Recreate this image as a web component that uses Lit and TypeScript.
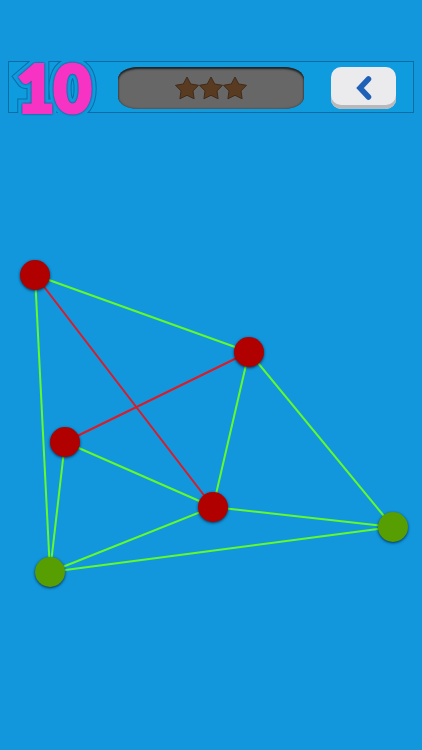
import { LitElement, html, svg, css } from 'lit';
import { customElement, property } from 'lit/decorators.js';
import { styleMap } from 'lit/directives/style-map.js';

interface Point {
  x: number;
  y: number;
  solved?: boolean;
}

interface Edge {
  from: number;
  to: number;
  crossed?: boolean;
}

const BOARD = { width: 422, height: 636 };

const POINTS: Point[] = [
  { x: 35, y: 162 },
  { x: 249, y: 239 },
  { x: 65, y: 329 },
  { x: 213, y: 394 },
  { x: 50, y: 459, solved: true },
  { x: 393, y: 414, solved: true },
];

const EDGES: Edge[] = [
  { from: 0, to: 1 },
  { from: 0, to: 4 },
  { from: 1, to: 3 },
  { from: 1, to: 5 },
  { from: 2, to: 3 },
  { from: 2, to: 4 },
  { from: 3, to: 4 },
  { from: 3, to: 5 },
  { from: 4, to: 5 },
  { from: 0, to: 3, crossed: true },
  { from: 1, to: 2, crossed: true },
];

@customElement('level-header')
class LevelHeader extends LitElement {
  @property({ type: Number }) level = 1;

  static styles = css`
    :host {
      display: block;
      padding: 61px 8px 0;
    }

    .bar {
      display: flex;
      align-items: center;
      height: 48px;
      padding: 2px 17px 0 5px;
      border: 1px solid #0c6ca6;
      background: #0f9cdf;
    }

    .level {
      position: relative;
      width: 80px;
      font-family: Lato, 'Open Sans', sans-serif;
      font-size: 64px;
      font-weight: 900;
      line-height: 46px;
      color: #f733c4;
      text-align: center;
      stroke-linejoin: round;
    }

    .level::before,
    .level::after {
      content: attr(data-level);
      position: absolute;
      inset: 0;
      clip-path: inset(-4px -8px -2px);
    }

    .level::before {
      color: #0c6ca6;
      -webkit-text-stroke: 14px #0c6ca6;
    }

    .level::after {
      color: #0f9cdf;
      -webkit-text-stroke: 12px #0f9cdf;
    }

    .digits {
      position: relative;
      z-index: 1;
      -webkit-text-stroke: 4px #f733c4;
      filter: drop-shadow(0 0 1px #103a70);
    }

    .stars {
      display: flex;
      flex: 1;
      align-items: center;
      justify-content: center;
      height: 42px;
      margin: 0 27px 0 24px;
      border-radius: 20px / 12px;
      background: #676767;
      box-shadow: inset 0 2px 2px #1c2226, inset 0 0 2px #333;
    }

    .star {
      width: 24px;
      height: 24px;
      fill: #593b22;
      stroke: #402b1b;
      stroke-linejoin: round;
    }

    .back {
      display: flex;
      align-items: center;
      justify-content: center;
      width: 65px;
      height: 42px;
      padding: 0;
      border: 0;
      border-radius: 10px;
      background: #ebebed;
      box-shadow: inset 0 -4px #b9b9bb;
      cursor: pointer;
    }

    .back svg {
      width: 16px;
      height: 26px;
      fill: none;
      stroke: #2061b7;
      stroke-width: 5.5;
      stroke-linecap: round;
    }
  `;

  render() {
    return html`
      <header class="bar">
        <div class="level" data-level=${this.level}>
          <span class="digits">${this.level}</span>
        </div>
        <div class="stars">
          ${[1, 2, 3].map(() => html`
            <svg class="star" viewBox="0 0 24 24" aria-hidden="true">
              <path d="M12 1l3.700 7 7.800 1.300-5.500 5.600 1.100 7.900-7.100-3.500-7.100 3.500L6 14.900.5 9.300 8.300 8z" />
            </svg>
          `)}
        </div>
        <button class="back" aria-label="Back">
          <svg viewBox="0 0 16 26" aria-hidden="true">
            <path d="M12.500 4L4 13l8.500 9" />
          </svg>
        </button>
      </header>
    `;
  }
}

@customElement('graph-board')
class GraphBoard extends LitElement {
  static styles = css`
    :host {
      display: block;
    }

    .board {
      position: relative;
    }

    .lines {
      display: block;
      width: 100%;
    }

    .line {
      stroke: #62fa2c;
      stroke-width: 2;
    }

    .crossed {
      stroke: #dc1a28;
    }

    .node {
      position: absolute;
      width: 30px;
      height: 30px;
      padding: 0;
      border: 0;
      border-radius: 50%;
      background: #b00000;
      box-shadow: 0 1px 3px rgba(0, 20, 50, 0.8);
      transform: translate(-50%, -50%);
      cursor: grab;
    }

    .solved {
      background: #579e02;
    }
  `;

  renderEdge(edge: Edge) {
    const a = POINTS[edge.from];
    const b = POINTS[edge.to];
    return svg`
      <line class="line ${edge.crossed ? 'crossed' : ''}"
        x1=${a.x} y1=${a.y} x2=${b.x} y2=${b.y} />
    `;
  }

  renderNode(point: Point, index: number) {
    const place = {
      left: `${(point.x / BOARD.width) * 100}%`,
      top: `${(point.y / BOARD.height) * 100}%`,
    };
    return html`
      <button class="node ${point.solved ? 'solved' : ''}"
        style=${styleMap(place)}
        aria-label="Node ${index + 1}"></button>
    `;
  }

  render() {
    return html`
      <div class="board">
        <svg class="lines" viewBox="0 0 ${BOARD.width} ${BOARD.height}" aria-hidden="true">
          ${EDGES.map((edge) => this.renderEdge(edge))}
        </svg>
        ${POINTS.map((point, i) => this.renderNode(point, i))}
      </div>
    `;
  }
}

@customElement('app-root')
class AppRoot extends LitElement {
  static styles = css`
    :host {
      display: block;
      min-height: 100vh;
      background: #1297dc;
    }
  `;

  render() {
    return html`
      <level-header .level=${10}></level-header>
      <graph-board></graph-board>
    `;
  }
}
